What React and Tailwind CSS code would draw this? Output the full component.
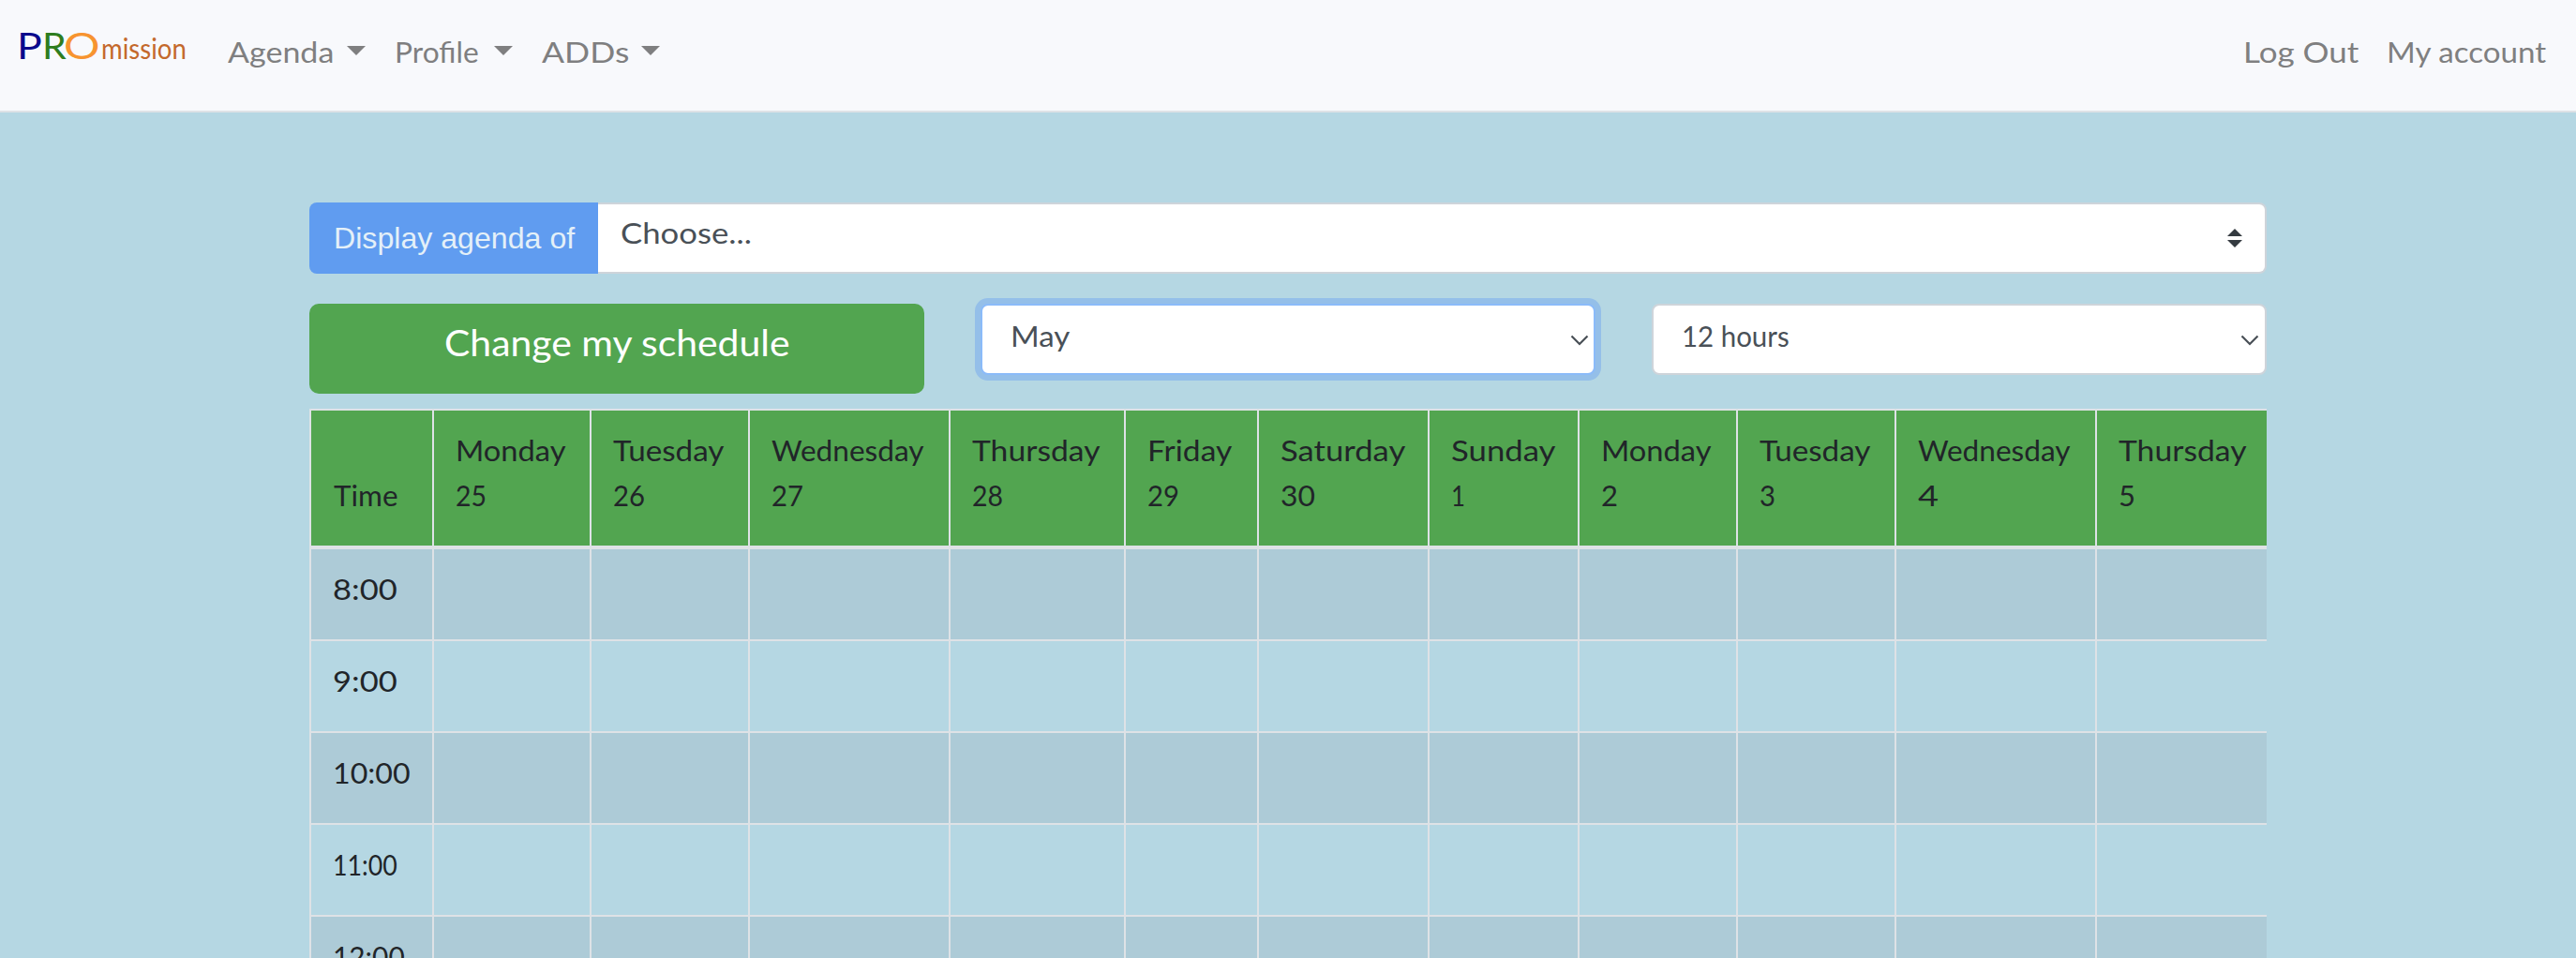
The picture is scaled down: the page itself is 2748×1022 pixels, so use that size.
import React, { useLayoutEffect, useRef } from "react";

// Widens or narrows a label's letters so that it fills the given width.
function Fit({ w, children, className = "" }) {
  const ref = useRef(null);
  useLayoutEffect(() => {
    const el = ref.current;
    el.style.transform = `scaleX(${w / el.offsetWidth})`;
  }, [w, children]);
  return (
    <span className="block shrink-0 overflow-visible" style={{ width: w }}>
      <span ref={ref} className={`inline-block origin-left whitespace-pre ${className}`}>{children}</span>
    </span>
  );
}

const days = [
  ["Monday", "25", 118, 33],
  ["Tuesday", "26", 119, 34],
  ["Wednesday", "27", 163, 34],
  ["Thursday", "28", 137, 33],
  ["Friday", "29", 90, 34],
  ["Saturday", "30", 133, 37],
  ["Sunday", "1", 111, 15],
  ["Monday", "2", 118, 18],
  ["Tuesday", "3", 119, 17],
  ["Wednesday", "4", 163, 22],
  ["Thursday", "5", 137, 18],
];

const hours = [["8:00", 69], ["9:00", 69], ["10:00", 83], ["11:00", 69], ["12:00", 77]];

const cols = "grid w-[2088px] grid-cols-[131px_168px_169px_214px_187px_142px_182px_160px_169px_169px_214px_183px]";

const Caret = ({ className }) => (
  <svg className={`mt-[18px] h-[10px] w-[20px] shrink-0 ${className}`} viewBox="0 0 20 10">
    <path d="M0 0H20L10 10Z" fill="#7f7f80" />
  </svg>
);

const Chevron = () => (
  <svg className="mt-[31px] h-[12px] w-[20px] shrink-0" viewBox="0 0 20 12" fill="none">
    <path d="M1.5 1.5L10 10L18.5 1.5" stroke="#495057" strokeWidth="2.2" />
  </svg>
);

export default function App() {
  return (
    <div className="h-[1022px] w-[2748px] overflow-hidden bg-[#b5d7e3] font-[Papyrus,Lato,sans-serif] text-[31px] leading-[48px] text-[#212529]">
      <nav className="flex h-[120px] border-b-2 border-[#dee2e6] bg-[#f8f9fc] pt-[31px] text-[#7f7f80]">
        <div className="ml-[18px] flex h-[48px] w-[225px] -translate-y-[7px] items-baseline">
          <Fit w={27} className="text-[38px] text-[#0a0a8c]">P</Fit>
          <Fit w={26} className="text-[38px] text-[#2e7d1e]">R</Fit>
          <Fit w={38} className="-ml-[3px] text-[38px] text-[#f7942f]">O</Fit>
          <Fit w={91} className="-ml-[1px] text-[30px] text-[#c4692c]">mission</Fit>
        </div>
        <Fit w={113}>Agenda</Fit>
        <Caret className="ml-[14px]" />
        <div className="w-[31px]" />
        <Fit w={90}>Profile</Fit>
        <Caret className="ml-[16px]" />
        <div className="w-[31px]" />
        <Fit w={93}>ADDs</Fit>
        <Caret className="ml-[13px]" />
        <div className="ml-auto flex gap-[30px] pr-[32px]">
          <Fit w={123}>Log Out</Fit>
          <Fit w={170}>My account</Fit>
        </div>
      </nav>

      <main className="ml-[330px] w-[2088px] pt-[96px]">
        <div className="flex h-[76px] w-[2088px]">
          <div className="flex w-[308px] items-center justify-center rounded-l-[8px] bg-[#609cf0] font-['Liberation_Sans',sans-serif] text-[32px] text-[#e4f0f8]">
            <Fit w={257}>Display agenda of</Fit>
          </div>
          <div className="flex flex-1 justify-between rounded-r-[8px] border-2 border-l-0 border-[#ced4da] bg-white pl-[24px] pr-[24px] pt-[6px] text-[#495057]">
            <Fit w={140}>Choose...</Fit>
            <svg className="mt-[20px] h-[20px] w-[16px]" viewBox="0 0 16 20" fill="#343a40">
              <path d="M0 8L8 0L16 8ZM0 12H16L8 20Z" />
            </svg>
          </div>
        </div>

        <div className="mt-[32px] flex h-[96px] w-[2088px] items-start">
          <div className="flex h-[96px] w-[656px] justify-center rounded-[10px] bg-[#52a550] pt-[17px] text-[39px] text-white">
            <Fit w={368}>Change my schedule</Fit>
          </div>
          <div className="ml-[60px] flex h-[76px] w-[656px] justify-between rounded-[8px] border-2 border-[#8bbbf9] bg-white pl-[30px] pr-[5px] text-[#495057] shadow-[0_0_0_6px_#94bfe9]">
            <Fit w={63} className="mt-[8px]">May</Fit>
            <Chevron />
          </div>
          <div className="ml-[60px] flex h-[76px] w-[656px] justify-between rounded-[8px] border-2 border-[#ced4da] bg-white pl-[30px] pr-[6px] text-[#495057]">
            <Fit w={115} className="mt-[8px]">12 hours</Fit>
            <Chevron />
          </div>
        </div>

        <div className="mt-[16px]">
          <div className={`${cols} h-[150px] border-b-4 border-t-2 border-[#dee2e6] bg-[#52a550]`}>
            <div className="border-l-2 border-[#dee2e6] pl-[24px] pt-[66px]">
              <Fit w={69}>Time</Fit>
            </div>
            {days.map(([day, n, w, nw], i) => (
              <div key={i} className="border-l-2 border-[#dee2e6] pl-[23px] pt-[18px]">
                <Fit w={w}>{day}</Fit>
                <Fit w={nw}>{n}</Fit>
              </div>
            ))}
          </div>
          {hours.map(([h, w], r) => (
            <div key={h} className={`${cols} h-[98px] border-b-2 border-[#dee2e6] ${r % 2 ? "" : "bg-[#adcbd7]"}`}>
              <div className="border-l-2 border-[#dee2e6] pl-[23px] pt-[18px]">
                <Fit w={w}>{h}</Fit>
              </div>
              {days.map((_, i) => (
                <div key={i} className="border-l-2 border-[#dee2e6]" />
              ))}
            </div>
          ))}
        </div>
      </main>
    </div>
  );
}
